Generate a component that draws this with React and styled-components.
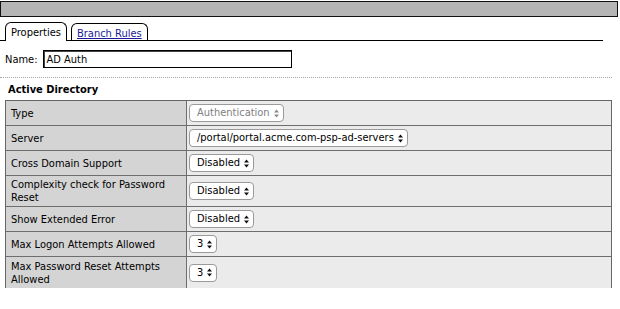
import React from 'react'
import styled, { createGlobalStyle } from 'styled-components'

const Global = createGlobalStyle`
body{
  margin: 0;
  background: #fff;
  font-family: Tahoma, "DejaVu Sans Condensed", "Liberation Sans", sans-serif;
  font-size: 11px;
  color: #000;
}
`

const Page = styled.div`
width: 620px;
height: 309px;
overflow: hidden;
padding-top: 1px;
box-sizing: border-box;
`

const TopBar = styled.div`
width: 618px;
height: 16px;
box-sizing: border-box;
background: #b5b5b5;
border: 1px solid #111;
`

const Tabs = styled.div`
display: flex;
align-items: flex-end;
gap: 4px;
width: 603px;
height: 24px;
box-sizing: border-box;
padding-left: 5px;
border-bottom: 1px solid #000;
`

const Tab = styled.div`
height: ${p => p.active ? '19px' : '17px'};
margin-bottom: ${p => p.active ? '-1px' : '0'};
box-sizing: border-box;
padding: 3px 5px 0 5px;
background: #fff;
border: 1px solid #000;
border-bottom: none;
border-radius: 6px 6px 0 0;
line-height: 13px;

a{
  color: #1a1a9a;
  text-decoration: underline;
}
`

const NameRow = styled.div`
display: flex;
align-items: center;
gap: 5px;
padding: 9px 0 0 5px;
`

const NameInput = styled.div`
width: 249px;
height: 18px;
box-sizing: border-box;
border: 1px solid #000;
box-shadow: inset 1px 1px 0 #444;
padding: 1px 3px;
line-height: 15px;
`

const Divider = styled.div`
width: 612px;
margin-top: 9px;
border-top: 1px dotted #a8a8a8;
`

const SectionTitle = styled.div`
font-weight: bold;
padding: 5px 0 0 8px;
line-height: 13px;
height: 15px;
`

const Table = styled.div`
margin: 2px 0 0 5px;
width: 607px;
box-sizing: border-box;
border: 1px solid #666;
border-bottom: none;
`

const Row = styled.div`
display: grid;
grid-template-columns: 181px 1fr;
height: ${p => p.tall ? '31px' : '25px'};
box-sizing: border-box;
border-bottom: ${p => p.last ? 'none' : '1px solid #6e6e6e'};
`

const Label = styled.div`
background: #d4d4d4;
border-right: 1px solid #6e6e6e;
display: flex;
align-items: center;
padding: 0 8px 0 5px;
line-height: 13px;
`

const Value = styled.div`
background: #ebebeb;
display: flex;
align-items: center;
padding-left: 2px;
`

const Select = styled.div`
display: inline-flex;
align-items: center;
gap: 4px;
height: 18px;
box-sizing: border-box;
padding: 0 4px 0 7px;
background: #fff;
border: 1px solid #9a9a9a;
border-radius: 4px;
color: ${p => p.disabled ? '#808080' : '#000'};
line-height: 14px;

svg{
  display: block;
}
`

function Arrows({ disabled }) {
  const c = disabled ? '#8a8a8a' : '#111'
  return (
    <svg width="5" height="9" viewBox="0 0 5 9">
      <path d="M2.5 0.5 L5 3.5 L0 3.5 Z" fill={c} />
      <path d="M0 5.5 L5 5.5 L2.5 8.5 Z" fill={c} />
    </svg>
  )
}

const rows = [
  { label: 'Type', value: 'Authentication', disabled: true },
  { label: 'Server', value: '/portal/portal.acme.com-psp-ad-servers' },
  { label: 'Cross Domain Support', value: 'Disabled' },
  { label: 'Complexity check for Password Reset', value: 'Disabled', tall: true },
  { label: 'Show Extended Error', value: 'Disabled' },
  { label: 'Max Logon Attempts Allowed', value: '3' },
  { label: 'Max Password Reset Attempts Allowed', value: '3', tall: true },
]

export default function App() {
  return (
    <Page>
      <Global />
      <TopBar />
      <Tabs>
        <Tab active>Properties</Tab>
        <Tab><a href="#">Branch Rules</a></Tab>
      </Tabs>
      <NameRow>
        Name:
        <NameInput>AD Auth</NameInput>
      </NameRow>
      <Divider />
      <SectionTitle>Active Directory</SectionTitle>
      <Table>
        {rows.map((r, i) => (
          <Row key={r.label} tall={r.tall} last={i === rows.length - 1}>
            <Label>{r.label}</Label>
            <Value>
              <Select disabled={r.disabled}>
                {r.value}
                <Arrows disabled={r.disabled} />
              </Select>
            </Value>
          </Row>
        ))}
      </Table>
    </Page>
  )
}
